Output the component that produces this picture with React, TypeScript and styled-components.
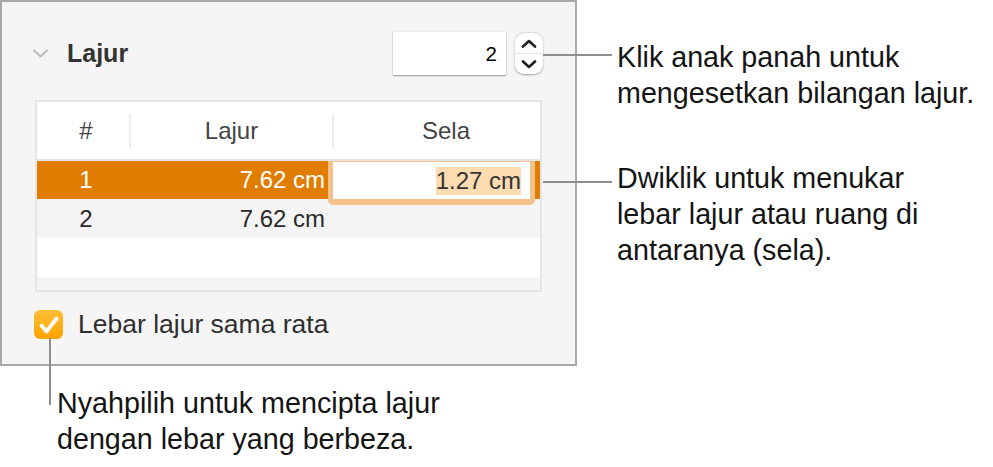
import React from "react";
import styled, { createGlobalStyle } from "styled-components";

const Global = createGlobalStyle`
  html, body { margin: 0; padding: 0; background: #fff; }
  body { font-family: "Liberation Sans", Arial, sans-serif; -webkit-font-smoothing: antialiased; }
  * { box-sizing: border-box; }
`;

const Page = styled.div`
  width: 993px;
  height: 467px;
  display: grid;
  grid-template-columns: 577px 1fr;
  overflow: hidden;
`;

const LeftCol = styled.div`
  display: flex;
  flex-direction: column;
`;

const RightCol = styled.div`
  display: flex;
  flex-direction: column;
  gap: 49px;
  padding-top: 39px;
  margin-left: -34px;
`;

const Note = styled.div<{ $vertical?: boolean }>`
  display: flex;
  align-items: flex-start;
  ${(p) => (p.$vertical ? "margin-top: 19px; padding-left: 49px;" : "")}
`;

const Leader = styled.div<{ $vertical?: boolean; $offset: number; $len: number }>`
  flex-shrink: 0;
  position: relative;
  z-index: 1;
  background: #8e8e8e;
  width: ${(p) => (p.$vertical ? "2px" : `${p.$len}px`)};
  height: ${(p) => (p.$vertical ? `${p.$len}px` : "2px")};
  margin-top: ${(p) => p.$offset}px;
`;

const NoteText = styled.div<{ $gap: number }>`
  margin-left: ${(p) => p.$gap}px;
  font-size: 28.7px;
  line-height: 36px;
  color: #141414;
  white-space: nowrap;
`;

const Panel = styled.div`
  width: 577px;
  height: 366px;
  border: 2px solid #a9a9a9;
  background: #f5f5f5;
  display: flex;
  flex-direction: column;
`;

const HeaderRow = styled.div`
  display: flex;
  align-items: center;
  padding: 30px 32px 0 30px;
`;

const Disclosure = styled.svg`
  width: 17px;
  height: 11px;
  flex-shrink: 0;
`;

const Title = styled.div`
  margin-left: 18px;
  font-size: 25px;
  font-weight: 700;
  color: #333;
`;

const Spacer = styled.div`
  flex: 1;
`;

const NumberField = styled.div`
  width: 113px;
  height: 43px;
  background: #fff;
  box-shadow: 0 1px 1.5px rgba(0, 0, 0, 0.35), 0 0 0 0.5px rgba(0, 0, 0, 0.06);
  display: flex;
  align-items: center;
  justify-content: flex-end;
  padding-right: 9px;
  font-size: 20.5px;
  color: #000;
`;

const Stepper = styled.div`
  margin-left: 9px;
  width: 28px;
  height: 41px;
  border-radius: 9px;
  background: #fff;
  box-shadow: 0 0.5px 2px rgba(0, 0, 0, 0.35);
  display: flex;
  flex-direction: column;
  overflow: hidden;
`;

const StepHalf = styled.div<{ $lower?: boolean }>`
  flex: 1;
  display: flex;
  align-items: center;
  justify-content: center;
  ${(p) => (p.$lower ? "border-top: 1px solid #e2e2e2;" : "")}
`;

const Table = styled.div`
  margin: 25px 33px 0;
  height: 192px;
  border: 2px solid #e5e5e5;
  background: #fff;
  display: flex;
  flex-direction: column;
`;

const HeadRow = styled.div`
  height: 59px;
  display: grid;
  grid-template-columns: 92px 2px 201px 2px 1fr;
  align-items: center;
  border-bottom: 2px solid #e5e5e5;
  font-size: 24px;
  color: #444;
`;

const ColDivider = styled.div`
  width: 2px;
  height: 34px;
  background: #ececec;
`;

const HeadCell = styled.div<{ $pad?: number }>`
  text-align: center;
  padding-left: ${(p) => p.$pad ?? 0}px;
`;

const Row = styled.div<{ $h: number; $kind: "selected" | "alt" | "plain" }>`
  height: ${(p) => p.$h}px;
  display: grid;
  grid-template-columns: 92px 203px 1fr;
  align-items: center;
  font-size: 24px;
  background: ${(p) =>
    p.$kind === "selected" ? "#e07c00" : p.$kind === "alt" ? "#f3f4f3" : "#fff"};
  color: ${(p) => (p.$kind === "selected" ? "#fff" : "#2a2a2a")};
`;

const Strip = styled.div`
  flex: 1;
  background: #f3f4f3;
`;

const Cell = styled.div<{ $align: "center" | "right" }>`
  text-align: ${(p) => p.$align};
  padding-left: ${(p) => (p.$align === "center" ? 6 : 0)}px;
  padding-right: ${(p) => (p.$align === "right" ? 7 : 0)}px;
`;

const EditCell = styled.div`
  position: relative;
  align-self: stretch;
`;

const EditBox = styled.div`
  position: absolute;
  left: -4px;
  right: 5px;
  top: 0;
  height: 44px;
  background: #fff;
  border-style: solid;
  border-color: #f4c08c;
  border-width: 1px 5px 6px 5px;
  border-radius: 0 0 5px 5px;
  display: flex;
  align-items: center;
  justify-content: flex-end;
  padding-right: 9px;
  color: #333;
`;

const Highlight = styled.span`
  background: #fddcb2;
`;

const CheckRow = styled.div`
  display: flex;
  align-items: center;
  margin-top: 17px;
  padding-left: 32px;
`;

const CheckBox = styled.div`
  width: 29px;
  height: 29px;
  border-radius: 6px;
  background: linear-gradient(#ffbe38, #ffa300);
  display: flex;
  align-items: center;
  justify-content: center;
`;

const CheckLabel = styled.div`
  margin-left: 15px;
  font-size: 26.5px;
  color: #2f2f2f;
`;

export default function App() {
  return (
    <>
      <Global />
      <Page>
        <LeftCol>
          <Panel>
            <HeaderRow>
              <Disclosure viewBox="0 0 17 11">
                <path d="M2 2.5 L8.5 8.5 L15 2.5" fill="none" stroke="#bdbdbd" strokeWidth="2.2" strokeLinecap="round" strokeLinejoin="round" />
              </Disclosure>
              <Title>Lajur</Title>
              <Spacer />
              <NumberField>2</NumberField>
              <Stepper>
                <StepHalf>
                  <svg width="16" height="9" viewBox="0 0 16 9">
                    <path d="M2 7.5 L8 2 L14 7.5" fill="none" stroke="#1e1e1e" strokeWidth="2.6" strokeLinecap="round" strokeLinejoin="round" />
                  </svg>
                </StepHalf>
                <StepHalf $lower>
                  <svg width="16" height="9" viewBox="0 0 16 9">
                    <path d="M2 1.5 L8 7 L14 1.5" fill="none" stroke="#1e1e1e" strokeWidth="2.6" strokeLinecap="round" strokeLinejoin="round" />
                  </svg>
                </StepHalf>
              </Stepper>
            </HeaderRow>
            <Table>
              <HeadRow>
                <HeadCell $pad={6}>#</HeadCell>
                <ColDivider />
                <HeadCell>Lajur</HeadCell>
                <ColDivider />
                <HeadCell $pad={18}>Sela</HeadCell>
              </HeadRow>
              <Row $h={38} $kind="selected">
                <Cell $align="center">1</Cell>
                <Cell $align="right">7.62 cm</Cell>
                <EditCell>
                  <EditBox>
                    <Highlight>1.27 cm</Highlight>
                  </EditBox>
                </EditCell>
              </Row>
              <Row $h={39} $kind="alt">
                <Cell $align="center">2</Cell>
                <Cell $align="right">7.62 cm</Cell>
                <div />
              </Row>
              <Row $h={39} $kind="plain" />
              <Strip />
            </Table>
            <CheckRow>
              <CheckBox>
                <svg width="22" height="20" viewBox="0 0 22 20">
                  <path d="M3.5 10.5 L8.5 16.5 L18.5 3.5" fill="none" stroke="#fff" strokeWidth="3.8" strokeLinecap="round" strokeLinejoin="round" />
                </svg>
              </CheckBox>
              <CheckLabel>Lebar lajur sama rata</CheckLabel>
            </CheckRow>
          </Panel>
          <Note $vertical>
            <Leader $vertical $offset={-47} $len={67} />
            <NoteText $gap={6}>
              Nyahpilih untuk mencipta lajur
              <br />
              dengan lebar yang berbeza.
            </NoteText>
          </Note>
        </LeftCol>
        <RightCol>
          <Note>
            <Leader $offset={15} $len={69} />
            <NoteText $gap={5}>
              Klik anak panah untuk
              <br />
              mengesetkan bilangan lajur.
            </NoteText>
          </Note>
          <Note>
            <Leader $offset={21} $len={69} />
            <NoteText $gap={5}>
              Dwiklik untuk menukar
              <br />
              lebar lajur atau ruang di
              <br />
              antaranya (sela).
            </NoteText>
          </Note>
        </RightCol>
      </Page>
    </>
  );
}
